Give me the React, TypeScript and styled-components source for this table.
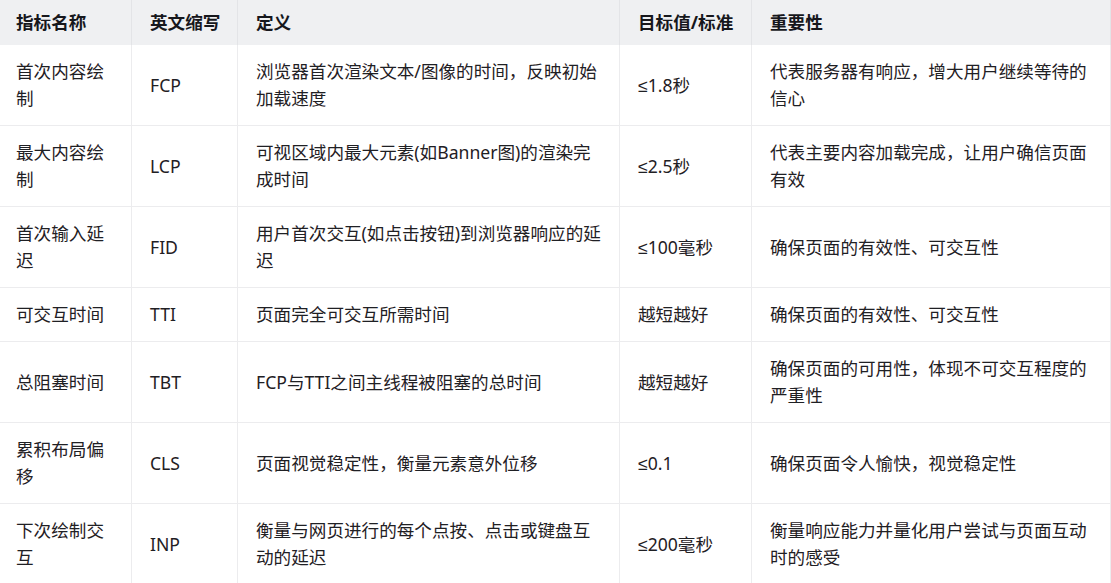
import React from "react";
import styled, { createGlobalStyle } from "styled-components";

type Metric = {
  name: string;
  abbr: string;
  definition: string;
  target: string;
  importance: string;
};

const metrics: Metric[] = [
  {
    name: "首次内容绘制",
    abbr: "FCP",
    definition: "浏览器首次渲染文本/图像的时间，反映初始加载速度",
    target: "≤1.8秒",
    importance: "代表服务器有响应，增大用户继续等待的信心",
  },
  {
    name: "最大内容绘制",
    abbr: "LCP",
    definition: "可视区域内最大元素(如Banner图)的渲染完成时间",
    target: "≤2.5秒",
    importance: "代表主要内容加载完成，让用户确信页面有效",
  },
  {
    name: "首次输入延迟",
    abbr: "FID",
    definition: "用户首次交互(如点击按钮)到浏览器响应的延迟",
    target: "≤100毫秒",
    importance: "确保页面的有效性、可交互性",
  },
  {
    name: "可交互时间",
    abbr: "TTI",
    definition: "页面完全可交互所需时间",
    target: "越短越好",
    importance: "确保页面的有效性、可交互性",
  },
  {
    name: "总阻塞时间",
    abbr: "TBT",
    definition: "FCP与TTI之间主线程被阻塞的总时间",
    target: "越短越好",
    importance: "确保页面的可用性，体现不可交互程度的严重性",
  },
  {
    name: "累积布局偏移",
    abbr: "CLS",
    definition: "页面视觉稳定性，衡量元素意外位移",
    target: "≤0.1",
    importance: "确保页面令人愉快，视觉稳定性",
  },
  {
    name: "下次绘制交互",
    abbr: "INP",
    definition: "衡量与网页进行的每个点按、点击或键盘互动的延迟",
    target: "≤200毫秒",
    importance: "衡量响应能力并量化用户尝试与页面互动时的感受",
  },
];

const columns = [
  { label: "指标名称", width: 134 },
  { label: "英文缩写", width: 106 },
  { label: "定义", width: 382 },
  { label: "目标值/标准", width: 132 },
  { label: "重要性", width: 359 },
];

const GlobalStyle = createGlobalStyle`
  html, body {
    margin: 0;
    padding: 0;
    overflow: hidden;
    background: #ffffff;
  }
  body {
    font-family: "Noto Sans", "Liberation Sans", "Noto Sans CJK SC", sans-serif;
    color: #1f2024;
  }
`;

const TableWrapper = styled.div`
  width: 1111px;
  overflow: hidden;
`;

const Table = styled.table`
  margin-left: -2px;
  width: 1113px;
  table-layout: fixed;
  border-collapse: separate;
  border-spacing: 0;
  font-size: 17.6px;
  line-height: 27px;
`;

const HeadCell = styled.th`
  box-sizing: border-box;
  background: #eff0f2;
  padding: 9px 18px;
  border-right: 1px solid #e3e4e7;
  text-align: left;
  font-weight: 700;
  color: #16171c;
  white-space: nowrap;
`;

const Cell = styled.td`
  box-sizing: border-box;
  padding: 13px 18px;
  border-right: 1px solid #ececee;
  border-bottom: 1px solid #ececee;
  vertical-align: middle;
  text-align: left;
  word-break: break-all;
`;

export default function App() {
  return (
    <>
      <GlobalStyle />
      <TableWrapper>
        <Table>
          <colgroup>
            {columns.map((c) => (
              <col key={c.label} style={{ width: c.width }} />
            ))}
          </colgroup>
          <thead>
            <tr>
              {columns.map((c) => (
                <HeadCell key={c.label}>{c.label}</HeadCell>
              ))}
            </tr>
          </thead>
          <tbody>
            {metrics.map((m) => (
              <tr key={m.abbr}>
                <Cell>{m.name}</Cell>
                <Cell>{m.abbr}</Cell>
                <Cell>{m.definition}</Cell>
                <Cell>{m.target}</Cell>
                <Cell>{m.importance}</Cell>
              </tr>
            ))}
          </tbody>
        </Table>
      </TableWrapper>
    </>
  );
}
